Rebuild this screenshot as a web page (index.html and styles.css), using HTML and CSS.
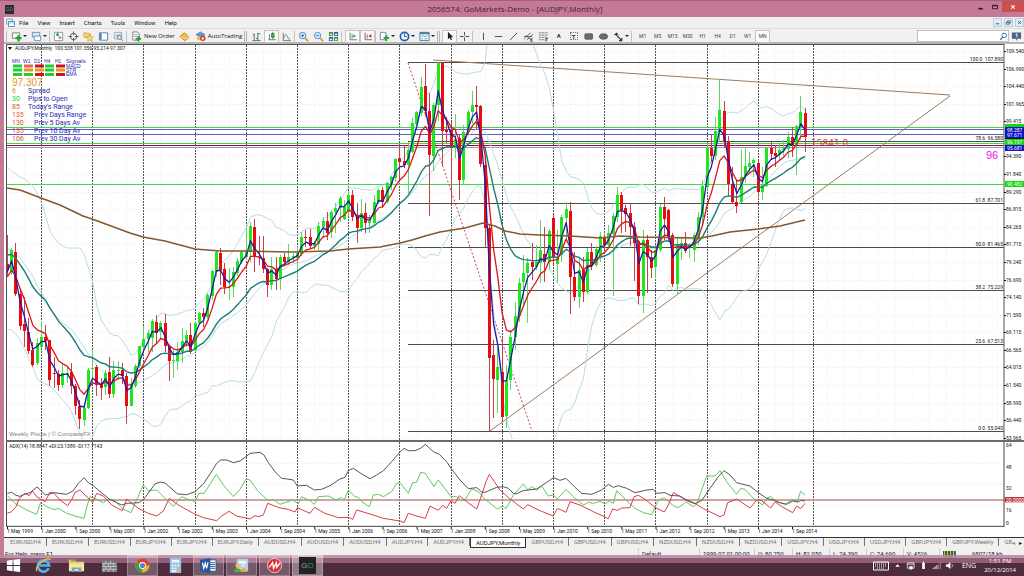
FILE: index.html
```html
<!DOCTYPE html>
<html lang="en">
<head>
<meta charset="utf-8">
<title>2056574: GoMarkets-Demo - [AUDJPY,Monthly]</title>
<link rel="stylesheet" href="styles.css">
</head>
<body>
<div class="window">
  <header class="titlebar">
    <span class="app-icon">GO</span>
    <h1 class="title">2056574: GoMarkets-Demo - [AUDJPY,Monthly]</h1>
    <div class="window-buttons">
      <button class="win-btn" aria-label="Minimize"><svg viewBox="0 0 12 12"><path d="M3 8h5" stroke="#2a1020" stroke-width="2"/></svg></button>
      <button class="win-btn" aria-label="Maximize"><svg viewBox="0 0 12 12"><path d="M3 4h6v4H3zM3 4.500h6" fill="none" stroke="#2a1020"/></svg></button>
      <button class="win-btn win-close" aria-label="Close"><svg viewBox="0 0 12 12"><path d="M4 4l4 4M8 4l-4 4" stroke="#fff" stroke-width="1.300"/></svg></button>
    </div>
  </header>

  <div class="client">
    <nav class="menubar">
      <svg class="menu-icon" viewBox="0 0 9 9"><path d="M.500 1h6v5h-6z" fill="#e8f2fb" stroke="#7aa7cc"/><path d="M2.500 3.500h6v5h-6z" fill="#fff" stroke="#5b93c0"/><path d="M3 5h5" stroke="#9cc4e4"/></svg>
      <button class="menu">File</button><button class="menu">View</button><button class="menu">Insert</button><button class="menu">Charts</button><button class="menu">Tools</button><button class="menu">Window</button><button class="menu">Help</button>
      <div class="mdi-buttons">
        <button class="mdi" aria-label="Minimize chart"><svg viewBox="0 0 8 8"><path d="M2 5.500h4" stroke="#345" /></svg></button>
        <button class="mdi" aria-label="Restore chart"><svg viewBox="0 0 8 8"><path d="M3 2h3.500v2.500H3zM1.500 3.500H5V6H1.500z" fill="#dce9f5" stroke="#456" stroke-width=".8"/></svg></button>
        <button class="mdi" aria-label="Close chart"><svg viewBox="0 0 8 8"><path d="M2.500 2.500l3 3M5.500 2.500l-3 3" stroke="#345"/></svg></button>
      </div>
    </nav>

    <div class="toolbar">
      <i class="grip"></i>
      <button class="tool wide" aria-label="New chart"><svg viewBox="0 0 12 12"><path d="M1.500 2h8v6h-8z" fill="#f4f8f4" stroke="#6a8a78"/><path d="M7 4.500h2.500v2h2V9h-2v2.500H7V9H5V6.500h2z" fill="#1fa52c"/></svg><b class="caret"></b></button>
      <button class="tool wide" aria-label="Profiles"><svg viewBox="0 0 12 12"><path d="M1.500 1.500h8v5h-8z" fill="#dcebf8" stroke="#5d8fb8"/><path d="M3.500 5.500h7v5h-7z" fill="#fff" stroke="#5d8fb8"/></svg><b class="caret"></b></button>
      <i class="sep"></i>
      <button class="tool" aria-label="Market watch"><svg viewBox="0 0 12 12"><path d="M1.500 1.500h9v9h-9z" fill="#fff" stroke="#6f9dc4"/><path d="M3 4l2-2 2 2-2 2z" fill="#27a336"/><path d="M5.500 7l2-1.500L9.500 7l-2 2z" fill="#e07b28"/></svg></button>
      <button class="tool" aria-label="Data window"><svg viewBox="0 0 12 12"><circle cx="6" cy="6" r="3.500" fill="none" stroke="#555"/><path d="M6 .500v4M6 7.500v4M.500 6h4M7.500 6h4" stroke="#555"/></svg></button>
      <button class="tool" aria-label="Navigator"><svg viewBox="0 0 12 12"><path d="M1 2h3l1 1h3v4H1z" fill="#f5d668" stroke="#c49a28" stroke-width=".7"/><path d="M7.500 4l1.200 2.300 2.600.4-1.900 1.800.5 2.600-2.400-1.200-2.400 1.200.5-2.600L3.700 6.700l2.600-.4z" fill="#ffe066" stroke="#c08a18" stroke-width=".6"/></svg></button>
      <button class="tool" aria-label="Terminal"><svg viewBox="0 0 12 12"><path d="M1.500 2h9v8h-9z" fill="#fff" stroke="#4a7fb4"/><path d="M2 2.500h2v7H2z" fill="#4a7fb4"/></svg></button>
      <button class="tool" aria-label="Strategy tester"><svg viewBox="0 0 12 12"><path d="M1.500 1.500h8v7h-8z" fill="#e9f1f7" stroke="#9ab"/><path d="M3 6l1.500-2L6 6l2-3" fill="none" stroke="#79a"/><circle cx="7" cy="7" r="2.200" fill="#dceaf6" stroke="#678"/><path d="M9 9l2 2" stroke="#678"/></svg></button>
      <i class="sep"></i>
      <button class="tool labelled"><svg viewBox="0 0 12 12"><path d="M2 1h5l2 2v7H2z" fill="#fff" stroke="#778"/><path d="M3.500 4h4M3.500 6h3" stroke="#99a"/><path d="M7 5.500h2v2h2v2H9v2H7v-2H5v-2h2z" fill="#1fa52c"/></svg>New Order</button>
      <button class="tool" aria-label="Metaeditor"><svg viewBox="0 0 12 12"><path d="M1 6l5-4 5 5-4.500 3.500z" fill="#f2be36" stroke="#b7801a"/><path d="M2 6.500l5 2 4-1.500" fill="none" stroke="#fff0b0" stroke-width=".8"/></svg></button>
      <button class="tool labelled"><svg viewBox="0 0 12 12"><path d="M1 4l5-3 5 3-5 2.500z" fill="#5a9ad2" stroke="#356c9e" stroke-width=".6"/><path d="M2 6h6v4H2z" fill="#f0c040"/><circle cx="8.500" cy="8" r="3" fill="#d83a20"/><path d="M7.200 7h2.500v2.200H7.200z" fill="#fff"/></svg>AutoTrading</button>
      <i class="sep group"></i>
      <button class="tool" aria-label="Bar chart"><svg viewBox="0 0 12 12"><path d="M1.500 10.500h9M3.500 10V3M7.500 10V2M7.500 3H10M5.500 8h2M2 4h1.500" stroke="#47705a" fill="none"/></svg></button>
      <button class="tool pressed" aria-label="Candlesticks"><svg viewBox="0 0 12 12"><path d="M1.500 10.500h9M3 10V4M7 1v9" stroke="#47705a"/><path d="M5.500 3h3v4.500h-3z" fill="#3bc04a" stroke="#267a34"/></svg></button>
      <button class="tool" aria-label="Line chart"><svg viewBox="0 0 12 12"><path d="M2.500 2v8.500H11M3 8c1-5 3-5 4-2s2 3 3 3" stroke="#6b7b70" fill="none"/></svg></button>
      <i class="sep"></i>
      <button class="tool" aria-label="Zoom in"><svg viewBox="0 0 12 12"><circle cx="5" cy="5" r="3.500" fill="#d9ecfb" stroke="#4a86bd"/><path d="M3.500 5h3M5 3.500v3" stroke="#2468a8"/><path d="M8 8l3 3" stroke="#d09a30" stroke-width="2"/></svg></button>
      <button class="tool" aria-label="Zoom out"><svg viewBox="0 0 12 12"><circle cx="5" cy="5" r="3.500" fill="#d9ecfb" stroke="#4a86bd"/><path d="M3.500 5h3" stroke="#2468a8"/><path d="M8 8l3 3" stroke="#d09a30" stroke-width="2"/></svg></button>
      <button class="tool" aria-label="Tile windows"><svg viewBox="0 0 12 12"><path d="M1 1h4.500v4.500H1zM6.500 6.500H11V11H6.500z" fill="#3f9a36"/><path d="M6.500 1H11v4.500H6.500zM1 6.500h4.500V11H1z" fill="#3567b0"/><path d="M2 3h2.500v1.500H2zM7.500 3H10v1.500H7.500zM2 8.500h2.500V10H2zM7.500 8.500H10V10H7.500z" fill="#e8f2e4"/></svg></button>
      <i class="sep gap"></i>
      <button class="tool pressed" aria-label="Auto scroll"><svg viewBox="0 0 12 12"><path d="M2.500 2v8.500H11M5 4v5" stroke="#47705a" fill="none"/><path d="M6.500 4l3 2-3 2z" fill="#2aa53a"/></svg></button>
      <button class="tool pressed" aria-label="Chart shift"><svg viewBox="0 0 12 12"><path d="M2.500 2v8.500H11M5 4v5" stroke="#6a5050" fill="none"/><path d="M10 3.500v5L6.500 6z" fill="#c03030"/></svg></button>
      <i class="sep"></i>
      <button class="tool wide" aria-label="Indicators"><svg viewBox="0 0 12 12"><path d="M1.500 1.500h6v8h-6z" fill="#fff" stroke="#789"/><path d="M7 4.500h2v2h2v2H9V11H7V8.500H5v-2h2z" fill="#1fa52c"/></svg><b class="caret"></b></button>
      <button class="tool wide" aria-label="Periods"><svg viewBox="0 0 12 12"><circle cx="6" cy="6" r="4.500" fill="#eef6fd" stroke="#1e5fae" stroke-width="1.800"/><path d="M6 3v3h2.500" fill="none" stroke="#444"/></svg><b class="caret"></b></button>
      <button class="tool wide" aria-label="Templates"><svg viewBox="0 0 12 12"><path d="M1 1.500h10v9H1z" fill="#fff" stroke="#447a9e"/><path d="M1 2.500h10" stroke="#447a9e" stroke-width="2"/><path d="M2.500 6l2-1 2 1 3-1M2.500 8.500h2M6 8.500h3" stroke="#5a9a80" fill="none"/></svg><b class="caret"></b></button>
      <i class="sep group"></i>
      <button class="tool pressed" aria-label="Cursor"><svg viewBox="0 0 12 12"><path d="M3.500 1v9l2-2 1.500 3 1.500-.7L7 7.500h3z" fill="#222"/></svg></button>
      <button class="tool" aria-label="Crosshair"><svg viewBox="0 0 12 12"><path d="M6 1v4M6 7v4M1 6h4M7 6h4" stroke="#444"/></svg></button>
      <i class="sep gap"></i>
      <button class="tool" aria-label="Vertical line"><svg viewBox="0 0 12 12"><path d="M6 2v8" stroke="#444"/></svg></button>
      <button class="tool" aria-label="Horizontal line"><svg viewBox="0 0 12 12"><path d="M2 6h8" stroke="#444"/></svg></button>
      <button class="tool" aria-label="Trendline"><svg viewBox="0 0 12 12"><path d="M2 10l8-8" stroke="#444"/></svg></button>
      <button class="tool" aria-label="Channel"><svg viewBox="0 0 12 12"><path d="M1 9l7-7M4 10l7-7M3 4.500l5 5M1 6h9" stroke="#444" stroke-width=".8"/><path d="M8.500 8v3.500M8.500 8.300h2M8.500 9.800h2M8.500 11.300h2" stroke="#222" stroke-width=".7"/></svg></button>
      <button class="tool" aria-label="Fibonacci"><svg viewBox="0 0 12 12"><path d="M1 2h10M1 4.500h10M1 7h10M1 9.500h6" stroke="#555" stroke-dasharray="1 .6"/><path d="M8.500 8v3.500M8.500 8.300h2.500M8.500 9.800h2" stroke="#222" stroke-width=".7"/></svg></button>
      <button class="tool glyph">A</button>
      <button class="tool glyph boxed"><span>T</span></button>
      <button class="tool" aria-label="Rectangle"><svg viewBox="0 0 12 12"><rect x="2" y="3" width="8.500" height="6" rx="1" fill="#6b6b6b" stroke="#333" stroke-width=".6"/></svg></button>
      <button class="tool" aria-label="Ellipse"><svg viewBox="0 0 12 12"><ellipse cx="6" cy="6" rx="4.500" ry="3" fill="#6b6b6b" stroke="#333" stroke-width=".6"/></svg></button>
      <button class="tool wide" aria-label="Arrows"><svg viewBox="0 0 12 12"><path d="M1 4l3-2.500L6 4H4.500l1 3L3 4.500z" fill="#333"/><path d="M5 5.500L9 10M9.500 7.500V10.500H6.500" stroke="#333" fill="none" stroke-width="1.300"/></svg><b class="caret"></b></button>
      <i class="sep gap"></i>
      <button class="tool period">M1</button><button class="tool period">M5</button><button class="tool period">M15</button><button class="tool period">M30</button><button class="tool period">H1</button><button class="tool period">H4</button><button class="tool period">D1</button><button class="tool period">W1</button><button class="tool period pressed">MN</button>
      <label class="search"><input type="search" aria-label="Search"><svg viewBox="0 0 12 12"><circle cx="7" cy="4.500" r="3" fill="#fff" stroke="#3f6fa8" stroke-width="1.300"/><path d="M5 7l-3.500 3.500" stroke="#3f6fa8" stroke-width="1.800"/></svg></label>
      <button class="tool" aria-label="Messages"><svg viewBox="0 0 12 12"><path d="M1 1.500h10v7H7l-1.500 2.500V8.500H1z" fill="#4a628c"/><path d="M5 4l1.500-1v4" stroke="#fff" fill="none"/></svg></button>
    </div>

    <main class="charts">
      <svg class="price-chart" id="price" viewBox="6 44 1018 396" role="img" aria-label="AUDJPY monthly price chart">
        <defs><clipPath id="plot"><path d="M7 44h997v395H7z"/></clipPath></defs>
        <g id="grid"></g>
        <g id="separators"></g>
        <g class="levels">
          <path class="green" d="M7 127.500h997M7 143.500h997M7 184.500h997"/>
          <path class="navy" d="M7 129.500h997M7 134.500h997"/>
          <path class="crimson" d="M7 145.500h997"/>
          <path class="lavender" d="M7 147.500h997"/>
          <path class="fib" d="M408 62.500h596M408 141.500h596M408 203.500h596M408 247.500h596M408 290.500h596M408 344.500h596M408 431.500h596"/>
        </g>
        <path class="trend" d="M433 60L950 95M490 431L950 96"/>
        <path class="fib-base" d="M408 63L532 431"/>
        <g id="bands" clip-path="url(#plot)"></g>
        <g id="candles"></g>
        <g id="averages"></g>
        <polyline class="ma slow" points="7,188 20,190 41,198 60,205 83,216 92,219 130,233 143,237 165,241 195,249 220,251 245,251 290,252 330,251 348,249 380,247 400,243 412,240 425,236 440,232 452,230 465,228 483,223 495,226 505,231 520,234 540,235 570,236 600,238 620,236 640,237 700,238 712,236 730,232 758,229 780,226 805,220"/>
        <path class="plot-edge" d="M6.500 44v396M6 44.500h998M1004 44v396"/>
        <g class="small">
          <path d="M8 47h4l-2 3z"/>
          <text x="15" y="50">AUDJPY,Monthly&#160; 100.538 101.356 95.214 97.307</text>
          <g class="fib-text">
            <text x="1003" y="61">100.0&#160; 107.890</text><text x="1003" y="140">78.6&#160; 96.580</text><text x="1003" y="202">61.8&#160; 87.701</text><text x="1003" y="246">50.0&#160; 81.465</text><text x="1003" y="289">38.2&#160; 75.229</text><text x="1003" y="343">23.6&#160; 67.513</text><text x="1003" y="430">0.0&#160; 55.040</text>
          </g>
        </g>
        <g class="signals">
          <text x="12" y="63">MN</text><text x="23" y="63">W1</text><text x="34" y="63">D1</text><text x="44" y="63">H4</text><text x="55" y="63">H1</text>
          <text class="wide-label" x="66" y="63">Signals</text>
          <text x="66" y="68">MACD</text><text x="66" y="72">STR</text><text x="66" y="76">EMA</text>
          <path stroke="#22cc33" d="M13 66h9M45 66h9M13 70h9M45 70h9M13 74.500h9M24 74.500h9M45 74.500h9"/>
          <path stroke="#e06a50" d="M24 66h9"/>
          <path stroke="#cc1420" d="M35 66h9M56 66h9M35 74.500h9M56 74.500h9"/>
          <path stroke="#e8961e" d="M24 70h9M35 70h9M56 70h9"/>
        </g>
        <text class="last-price" x="12" y="86">97.307</text>
        <g class="stats">
          <text class="amber" x="12" y="93">6</text><text x="28" y="93">Spread</text>
          <text class="lime" x="12" y="101">30</text><text x="28" y="101">Pips to Open</text>
          <text class="value" x="12" y="109">85</text><text x="28" y="109">Today's Range</text>
          <text class="value" x="12" y="117">135</text><text x="34" y="117">Prev Days Range</text>
          <text class="value" x="12" y="125">130</text><text x="34" y="125">Prev 5 Days Av</text>
          <text class="value" x="12" y="133">135</text><text x="34" y="133">Prev 10 Day Av</text>
          <text class="value" x="12" y="141">106</text><text x="34" y="141">Prev 30 Day Av</text>
        </g>
        <text class="countdown" x="811" y="146">15841.0</text>
        <text class="pivot-value" x="986" y="159">96</text>
        <text class="credit" x="9" y="436">Weekly Pivots | © CompassFX</text>
        <g class="small" id="scale"></g>
      </svg>
      <div class="splitter"></div>
      <svg class="adx-chart" id="adx" viewBox="18 36 3054 255" role="img" aria-label="ADX indicator">
        <g id="adx-grid"></g>
        <path class="adx-level" d="M21 210h2991"/>
        <polyline class="plus" points="22,197 45,220 80,240 110,253 122,218 140,230 162,239 175,235 200,250 225,258 252,265 262,225 270,200 290,208 310,218 325,207 345,212 365,235 393,248 405,220 430,165 445,182 470,180 500,210 520,229 545,200 565,208 585,215 597,190 612,190 635,155 649,133 670,165 700,200 720,178 738,147 750,150 775,185 805,212 818,208 840,223 878,210 895,222 905,200 930,212 943,223 955,200 985,198 1008,210 1025,202 1033,210 1045,180 1065,200 1075,202 1085,215 1108,230 1120,195 1135,193 1150,200 1175,185 1190,160 1200,158 1225,190 1238,158 1250,157 1262,127 1276,130 1302,170 1315,150 1353,200 1370,200 1385,212 1395,210 1415,177 1435,185 1455,208 1492,237 1508,228 1518,236 1540,195 1570,162 1583,180 1595,170 1610,180 1625,168 1645,198 1660,195 1672,207 1698,178 1720,200 1750,225 1765,217 1780,220 1800,214 1815,222 1828,213 1840,220 1850,182 1880,212 1905,235 1930,248 1955,254 1975,210 1993,203 2020,227 2035,233 2058,216 2080,230 2090,222 2105,180 2120,138 2145,138 2160,122 2180,155 2210,193 2222,175 2235,178 2260,205 2288,225 2300,205 2312,199 2330,215 2355,222 2378,210 2392,215 2402,184 2415,195"/>
        <polyline class="minus" points="22,250 35,245 48,230 58,205 75,190 88,197 97,183 110,200 135,215 150,187 162,190 180,210 203,227 215,210 225,187 240,180 255,195 278,217 290,190 310,198 335,225 367,242 380,207 395,220 415,235 445,250 470,258 490,243 508,205 535,225 580,250 610,263 650,272 665,258 687,244 710,258 750,267 765,257 775,260 790,255 803,220 840,234 865,238 885,246 892,233 930,250 943,232 975,250 1015,263 1045,262 1058,268 1070,240 1110,252 1150,265 1200,273 1212,278 1225,250 1250,258 1276,265 1290,228 1315,241 1328,226 1340,235 1353,212 1365,220 1378,197 1400,215 1430,237 1445,195 1458,155 1468,133 1500,180 1530,207 1570,237 1583,224 1620,242 1660,258 1672,235 1698,247 1710,215 1740,225 1780,245 1825,266 1838,237 1852,241 1865,234 1890,233 1902,200 1915,196 1935,208 1965,232 1993,246 2005,225 2020,188 2050,205 2085,220 2110,236 2160,260 2172,255 2183,218 2210,207 2250,234 2272,208 2285,212 2312,234 2325,215 2345,230 2378,248 2390,228 2402,236 2415,220"/>
        <polyline class="main" points="22,190 35,187 47,196 60,199 75,192 90,188 111,171 137,195 162,188 200,193 220,182 235,160 252,143 265,158 277,165 303,187 328,207 365,225 380,220 418,218 431,208 450,182 465,162 480,156 495,159 510,172 533,192 560,194 585,185 610,162 630,132 650,100 662,90 680,90 700,98 720,93 738,80 750,70 780,67 792,75 805,98 825,125 845,145 862,147 880,150 892,168 920,166 943,180 965,178 990,167 1020,147 1035,142 1045,122 1060,115 1090,135 1110,146 1130,135 1150,122 1175,95 1200,66 1212,55 1225,62 1245,62 1262,55 1276,43 1300,65 1318,73 1340,95 1353,115 1380,150 1405,176 1430,173 1445,186 1455,187 1490,172 1510,170 1525,175 1540,190 1548,192 1570,182 1610,177 1640,157 1661,143 1680,151 1698,145 1725,172 1745,190 1775,193 1805,180 1825,163 1840,172 1855,167 1880,175 1905,188 1940,180 1960,178 1970,190 1995,188 2010,196 2040,198 2060,212 2085,221 2105,212 2130,175 2155,140 2172,122 2190,135 2210,158 2225,162 2250,168 2275,188 2300,205 2320,210 2345,220 2360,223 2378,213 2395,216 2402,211 2415,213"/>
        <path class="adx-edge" d="M19.500 36v255M3012 36v255M18 289h2994"/>
        <path class="tag-red" d="M3014 201h60v16h-60z"/>
        <g class="adx-text">
          <text x="28" y="53">ADX(14) 18.8847 +DI:23.1389 -DI:17.7143</text>
          <text x="3018" y="50">64</text><text x="3018" y="118">48</text><text x="3018" y="179">32</text><text x="3018" y="245">16</text><text x="3018" y="284">0</text>
          <text class="tag-text" x="3018" y="215">20.0000</text>
        </g>
      </svg>
      <svg class="dates small" id="dates" viewBox="6 527 1018 10" role="img" aria-label="Time scale"></svg>
    </main>

    <nav class="tabs">
      <button class="tab">EURUSD,H4</button><button class="tab">EURUSD,H4</button><button class="tab">EURUSD,H4</button><button class="tab">EURJPY,H4</button><button class="tab">EURJPY,H4</button><button class="tab">EURJPY,Daily</button><button class="tab">AUDUSD,H4</button><button class="tab">AUDUSD,H4</button><button class="tab">AUDUSD,H4</button><button class="tab">AUDJPY,H4</button><button class="tab">AUDJPY,H4</button><button class="tab active">AUDJPY,Monthly</button><button class="tab">GBPUSD,H4</button><button class="tab">GBPUSD,H4</button><button class="tab">GBPUSD,H4</button><button class="tab">NZDUSD,H4</button><button class="tab">NZDUSD,H4</button><button class="tab">NZDUSD,H4</button><button class="tab">USDJPY,H4</button><button class="tab">USDJPY,H4</button><button class="tab">USDJPY,H4</button><button class="tab">GBPJPY,H4</button><button class="tab">GBPJPY,Weekly</button><button class="tab last">GB</button>
      <div class="tab-scroll"><button class="scroll-btn" aria-label="Scroll left">◂</button><button class="scroll-btn dark" aria-label="Scroll right">▸</button></div>
    </nav>

    <footer class="status">
      <span>For Help, press F1</span><span>Default</span><span>1999.07.01 00:00</span><span>O: 80.750</span><span>H: 82.050</span><span>L: 74.390</span><span>C: 74.690</span><span>V: 4526</span>
      <span class="traffic"><svg viewBox="0 0 13 7"><path d="M0 0h13v7H0z" fill="#3d5f36"/><path d="M1.500 0v7M4.500 0v7M7.500 0v4M10.500 0v7" stroke="#c8c832"/><path d="M9 2v5M12 0v4" stroke="#3a6ab0"/></svg>6807/18 kb</span>
    </footer>
  </div>
</div>

<div class="taskbar">
  <button class="task" aria-label="Start"><svg viewBox="0 0 18 18"><path d="M2 4l6-1v5.500H2zM9 2.800L16 2v6.500H9zM2 9.500h6V15l-6-1zM9 9.500h7V16l-7-1z" fill="#fff"/></svg></button>
  <button class="task" aria-label="Internet Explorer"><svg viewBox="0 0 18 18"><path d="M14.500 12a6 6 0 1 1 .5-3H5" fill="none" stroke="#4fb4f0" stroke-width="2.800"/><path d="M2 15C-1 10 13-1 16.500 3" fill="none" stroke="#f4c430" stroke-width="1.300"/></svg></button>
  <button class="task" aria-label="File Explorer"><svg viewBox="0 0 18 18"><path d="M1 3h6l1 2h9v10H1z" fill="#f0cf72"/><path d="M3 3h4v2H3z" fill="#78b84c"/><path d="M1 7h16v8H1z" fill="#f9e29b"/><path d="M4 16v-5h10v5h-3v-3H7v3z" fill="#67aee0"/></svg></button>
  <button class="task" aria-label="Firewall"><svg viewBox="0 0 18 18"><path d="M1 4h12l4 3v9H1z" fill="#777c80"/><path d="M1 7h15M1 10h16M1 13h16M5 4v3M10 4v3M3 7v3M8 7v3M13 7v3M5 10v3M10 10v3M3 13v3M8 13v3M13 13v3" stroke="#c3c7ca"/></svg></button>
  <button class="task open" aria-label="Chrome"><svg viewBox="0 0 18 18"><circle cx="9" cy="9" r="7.500" fill="#e2b52c"/><path d="M9 9L2.500 5.300A7.500 7.500 0 0 1 15.700 5.500z" fill="#d9402f"/><path d="M9 9L2.500 5.300A7.500 7.500 0 0 0 8.500 16.500z" fill="#3f9c49"/><path d="M9 9h7.400a7.500 7.500 0 0 0-.7-3.500H9z" fill="#d9402f"/><circle cx="9" cy="9" r="3.600" fill="#fff"/><circle cx="9" cy="9" r="2.700" fill="#4a86d8"/></svg></button>
  <button class="task" aria-label="Calculator"><svg viewBox="0 0 18 18"><path d="M3 1h12v16H3z" fill="#8ec3e6"/><path d="M5 3h8v3H5z" fill="#e8f6ff"/><path d="M5 8h2v2H5zM8 8h2v2H8zM11 8h2v2h-2zM5 11h2v2H5zM8 11h2v2H8zM5 14h5v2H5z" fill="#eef7fd"/><path d="M11 11h2v5h-2z" fill="#e8b860"/></svg></button>
  <button class="task open" aria-label="Word"><svg viewBox="0 0 18 18"><path d="M9 3h8v12H9z" fill="#fff" stroke="#2b579a"/><path d="M11 6h5M11 8h5M11 10h5M11 12h5" stroke="#2b579a"/><path d="M0 3l11-2v16L0 15z" fill="#2b579a"/><path d="M2.500 6l1.500 6 1.500-5.500L7 12l1.500-6.500" fill="none" stroke="#fff" stroke-width="1.300"/></svg></button>
  <button class="task open" aria-label="Contacts"><svg viewBox="0 0 18 18"><path d="M4 2h12v13H4z" fill="#a8d4ec"/><path d="M6 4h8v3H6z" fill="#eef8fd"/><circle cx="5" cy="9" r="2.500" fill="#e8c05a"/><path d="M1 16c0-5 8-5 8 0z" fill="#5ba840"/><circle cx="11" cy="9" r="2" fill="#f0d8b0"/><path d="M8 16c0-5 7-5 7 0z" fill="#e8a838"/></svg></button>
  <button class="task open" aria-label="Trading platform"><svg viewBox="0 0 18 18"><circle cx="9" cy="9" r="7.500" fill="#d62f38" stroke="#f2c9cc"/><path d="M3.500 11L7 6l1 6 3-6 .5 5L15 6" fill="none" stroke="#fff" stroke-width="1.500"/></svg></button>
  <button class="task open current" aria-label="GoMarkets"><span class="go">G<em>O</em></span></button>
  <div class="tray">
    <svg class="keyboard" viewBox="0 0 16 10"><path d="M.500 1h15v8H.500z" fill="none" stroke="#fff"/><path d="M2 3h12M2 5h12M4 7h8" stroke="#fff" stroke-dasharray="1 1"/></svg>
    <svg viewBox="0 0 10 10"><path d="M5 3.500L7.500 6.500h-5z" fill="#fff"/></svg>
    <svg viewBox="0 0 10 10"><path d="M1.500 2h7.500v6H1.500z" fill="none" stroke="#ddd"/><path d="M1 3.500h8M4 6h3v3H4z" stroke="#ddd" fill="#fff"/></svg>
    <svg viewBox="0 0 10 10"><path d="M3.500 2h3v7h-3zM4.500.500h1V2h-1z" fill="#fff"/></svg>
    <svg viewBox="0 0 10 10"><path d="M1.500 9V7.500M3.500 9V6M5.500 9V4.500" stroke="#fff"/><path d="M7.500 9V3M9.500 9V1" stroke="#a08a98"/></svg>
    <svg viewBox="0 0 10 10"><path d="M1 4h2l3-3v8L3 6.500H1z" fill="#fff"/><path d="M7.500 3.500c1 1 1 2.500 0 3.500" stroke="#ccc" fill="none"/></svg>
    <span class="lang">ENG</span>
    <time class="clock">1:51 PM<br>20/12/2014</time>
  </div>
</div>
<script src="chart.js"></script>
</body>
</html>
```

FILE: styles.css
```css
* { box-sizing: border-box; }

body {
  margin: 0;
  min-height: 100vh;
  background: #4e2c3e;
  color: #222;
  font: 6px/8px Roboto, "Noto Sans", sans-serif;
  overflow: hidden;
}

button {
  margin: 0;
  padding: 0;
  border: 0;
  background: none;
  color: inherit;
  font: inherit;
}

.window { background: #c47a97; }

.titlebar {
  display: flex;
  align-items: stretch;
  height: 17px;
  padding-left: 5px;
  border-top: 1px solid #a55f7a;
}

.app-icon {
  align-self: center;
  width: 9px;
  height: 9px;
  background: #2b2b2b;
  color: #6a8a7a;
  font-size: 5px;
  line-height: 9px;
  text-align: center;
}

.title {
  flex: 1;
  margin: 0;
  padding-left: 42px;
  color: #43222f;
  font: 8px/15px "Open Sans", sans-serif;
  text-align: center;
}

.window-buttons { display: flex; align-items: flex-start; }
.win-btn { width: 14px; height: 11px; }
.win-btn svg { display: block; width: 12px; height: 10px; margin: 0 auto; }
.win-close { width: 22px; background: #c9504e; }

.client {
  margin-left: 4px;
  background: #f0f0f0;
}

.menubar {
  display: flex;
  align-items: center;
  height: 11px;
  padding-left: 2px;
}

.menu-icon { width: 9px; height: 9px; }
.menu { padding: 0 4px; margin-right: 1px; color: #111; line-height: 10px; }
.mdi-buttons { display: flex; gap: 2px; margin-left: auto; }
.mdi { width: 9px; height: 9px; border: 1px solid #b9cbe0; background: #e2ecf6; }
.mdi svg { display: block; width: 7px; height: 7px; }

.toolbar {
  display: flex;
  align-items: center;
  height: 15px;
  padding-left: 2px;
  border-top: 1px solid #dcdcdc;
  background: #f1f1f1;
}

.grip { width: 3px; height: 11px; border-left: 1px solid #bbb; }
.tool {
  display: flex;
  flex: none;
  align-items: center;
  justify-content: center;
  width: 15px;
  height: 13px;
}
.tool svg { width: 11px; height: 11px; flex: none; }
.wide { width: 20px; gap: 1px; }
.caret { border: 2px solid transparent; border-top-color: #222; border-bottom: 0; }
.labelled { width: auto; gap: 2px; padding: 0 2px 0 3px; color: #111; font: 6px/10px "Open Sans", sans-serif; }
.pressed { border: 1px solid #c4c4c4; background: #fafafa; }
.pressed svg { width: 10px; height: 10px; }
.glyph { color: #333; font-weight: 700; }
.boxed span { width: 8px; height: 8px; border: 1px dotted #777; font-size: 6px; line-height: 7px; }
.period { color: #444; font-size: 5px; }
.sep { flex: none; width: 2px; height: 11px; border-left: 1px solid #c2c2c2; }
.gap { width: 4px; }
.group { width: 5px; border-left: 3px double #b4b4b4; }

.search {
  display: flex;
  align-items: center;
  width: 92px;
  height: 12px;
  margin-left: auto;
  border: 1px solid #c0c0c0;
  background: #fff;
}
.search input { flex: 1; min-width: 0; height: 8px; padding: 0; border: 0; outline: 0; background: none; font-size: 6px; }
.search svg { width: 9px; height: 9px; }

.charts {
  padding-left: 2px;
  border-top: 2px solid #b4b4b4;
  background: #fff;
  margin-top: -1px;
}
.charts svg { display: block; width: 100%; height: auto; }
.splitter { height: 2px; background: #6a6a6a; }

.small, .small text { font: 5px Roboto, sans-serif; fill: #111; }
.grid-line { fill: none; stroke: #f5f5f5; stroke-dasharray: 2 1; }
.year-line { fill: none; stroke: #555; stroke-dasharray: 2 1; }
.levels path { fill: none; }
.levels .green { stroke: #44d644; }
.levels .navy { stroke: #5c5cc4; }
.levels .crimson { stroke: #8c1028; }
.levels .lavender { stroke: #9494d0; }
.levels .fib { stroke: #4c4c4c; }
.trend { fill: none; stroke: #9c7c60; }
.fib-base { fill: none; stroke: #d04050; stroke-dasharray: 2 2; }
.up { fill: #1fe61f; stroke: none; }
.down { fill: #e80b14; stroke: none; }
.wick-up { stroke: #5fd65f; }
.wick-down { stroke: #c8404c; }
.band { fill: none; stroke: #b9dbe8; }
.ma { fill: none; stroke-linejoin: round; }
.fast { stroke: #1c1ca8; stroke-width: 1.300; }
.medium { stroke: #d8141c; stroke-width: 1.300; }
.base { stroke: #1c7c78; stroke-width: 1.400; }
.slow { stroke: #85572f; stroke-width: 1.500; }
.plot-edge { fill: none; stroke: #555; }
.fib-text { text-anchor: end; }

.signals text { fill: #2a2ab4; font: 5px "Liberation Sans", sans-serif; }
.signals .wide-label { font-size: 6px; }
.signals path { stroke-width: 3; }
.last-price { fill: #e8961e; font: 10px "Liberation Sans", sans-serif; }
.stats text { fill: #2a2ab4; font: 7px Roboto, sans-serif; }
.stats .value { fill: #dc5428; }
.stats .amber { fill: #e8961e; }
.stats .lime { fill: #22cc33; }
.countdown { fill: #e03838; font: 9px "DejaVu Sans", sans-serif; }
.pivot-value { fill: #e815e0; font: 11px "Liberation Sans", sans-serif; }
.credit { fill: #808080; font: 6px "Liberation Sans", sans-serif; }
.tag-green { fill: #12d812; }
.tag-blue { fill: #1010c8; }
.tag-black { fill: #111; }
.small .tag-text { fill: #fff; }

.adx-chart polyline { fill: none; stroke-width: 3; }
.plus { stroke: #5fc85f; }
.minus { stroke: #d84048; }
.main { stroke: #555; }
.adx-level { stroke: #c48484; stroke-width: 4; }
.adx-edge { fill: none; stroke: #444; stroke-width: 3; }
.adx-lines { stroke: #555; stroke-width: 3; stroke-dasharray: 6 3; }
.adx-grid-lines { fill: none; stroke: #f5f5f5; stroke-width: 3; stroke-dasharray: 6 3; }
.adx-text text { font: 15px Roboto, sans-serif; fill: #111; }
.adx-text .tag-text { fill: #fff; }
.tag-red { fill: #c03434; }

.tabs {
  display: flex;
  position: relative;
  height: 11px;
  padding-left: 1px;
  border-top: 1px solid #333;
  overflow: hidden;
}
.tab {
  flex: none;
  height: 8px;
  padding: 0 5px;
  border-right: 1px solid #777;
  color: #777;
  line-height: 8px;
}
.active {
  height: 10px;
  border: 1px solid #333;
  border-top: 0;
  background: #fff;
  color: #111;
}
.last { padding-right: 0; border: 0; }
.tab-scroll { position: absolute; right: 0; top: 0; display: flex; gap: 4px; padding: 0 2px; }
.scroll-btn { color: #888; line-height: 9px; }
.dark { color: #111; }

.status {
  display: grid;
  grid-template-columns: 1fr 61px 55px 38px 37px 37px 37px 36px 85px;
  height: 10px;
  padding-left: 1px;
  overflow: hidden;
  line-height: 12px;
}
.status span { padding-left: 3px; border-left: 1px solid #d0d0d0; white-space: nowrap; }
.status span:first-child { padding-left: 0; border: 0; }
.traffic { display: flex; align-items: center; gap: 16px; }
.traffic svg { width: 13px; height: 7px; }

.taskbar {
  display: flex;
  align-items: center;
  position: relative;
  height: 21px;
  margin-top: -3px;
  background: linear-gradient(#b98aa0e0 0 3px, #935c76 3px 8px, #4e2c3e 8px);
}
.task {
  display: grid;
  place-items: center;
  width: 31px;
  height: 21px;
  margin-right: 2px;
}
.task:first-child { width: 26px; }
.task svg { width: 17px; height: 17px; }
.open { background: #ffffff38; border: 1px solid #ffffff40; }
.current { background: #ffffff60; }
.go { width: 17px; height: 17px; background: #222; color: #999; font: 8px/17px "Liberation Sans", sans-serif; text-align: center; }
.go em { color: #1c9c5c; font-style: normal; }

.tray { display: flex; align-items: center; gap: 4px; margin-left: auto; padding-right: 8px; color: #fff; }
.tray svg { width: 9px; height: 9px; }
.tray .keyboard { width: 16px; height: 10px; }
.lang { padding: 0 4px; font: 7px/9px "Open Sans", sans-serif; }
.clock { font: 6px/9px "Open Sans", sans-serif; text-align: center; }
```

FILE: chart.js
```javascript
// One candle per month: high, body top, body bottom, low (chart units), colour.
const CANDLES = `235 264 270 277 r|248 250 272 275 g|243 252 294 296 r|290 294 326 330 r|297 324 331 347 r|318 332 351 354 r|342 350 365 367 r|338 343 363 365 g|321 337 347 348 g|325 337 341 350 r|340 340 380 386 r|357 373 374 388 r|370 374 385 391 r|363 373 385 388 g|367 373 375 383 g|363 372 386 394 r|384 386 406 415 r|400 406 419 429 r|405 408 420 426 g|368 370 408 409 g|350 368 369 380 g|365 367 385 396 r|378 384 388 400 r|370 373 387 395 g|357 372 394 398 r|361 370 394 398 g|361 370 371 380 g|363 370 376 384 r|373 376 406 424 r|378 385 406 406 g|364 366 386 388 g|346 346 366 368 g|326 339 347 350 g|330 333 339 352 g|319 321 338 352 g|315 322 333 343 r|321 323 332 340 g|314 323 346 352 r|346 347 361 381 r|350 360 361 378 g|342 352 361 370 g|328 341 352 363 g|330 335 342 347 g|323 335 352 354 r|321 323 350 352 g|312 313 323 325 g|308 313 317 327 r|293 295 317 319 g|270 271 296 300 g|250 252 272 277 g|248 253 270 285 r|263 269 287 294 r|268 286 287 300 g|267 272 287 297 g|258 261 273 276 g|250 252 262 264 g|228 251 257 260 g|222 226 252 262 g|219 227 257 272 r|236 257 258 265 r|236 258 269 273 r|268 269 285 297 r|257 269 285 290 g|257 269 279 290 r|255 257 279 290 g|253 257 262 265 r|244 257 262 265 g|253 256 258 263 g|247 253 258 278 g|232 237 254 256 g|230 237 238 247 r|229 237 246 248 r|241 243 246 250 g|222 226 244 250 g|217 221 227 238 g|212 221 233 240 r|210 212 232 238 g|203 208 212 233 g|196 198 208 222 g|200 207 219 220 g|191 195 212 216 g|190 195 217 221 r|203 215 228 243 r|199 213 228 232 g|203 213 223 233 r|215 221 223 233 g|195 202 223 226 g|188 190 202 204 g|187 190 202 208 r|182 183 202 204 g|176 177 184 190 g|158 159 178 182 g|145 158 162 180 r|145 161 165 168 r|142 150 165 193 g|118 123 152 153 g|111 112 124 126 g|77 87 113 116 g|64 86 111 116 r|93 111 155 216 r|103 105 156 171 g|62 63 105 121 g|62 63 131 166 r|117 130 132 143 r|122 130 148 202 r|114 139 148 158 g|135 138 180 200 r|125 132 180 184 g|110 112 132 134 g|91 105 112 124 g|86 105 107 130 r|105 106 164 167 r|163 165 228 247 r|225 228 358 431 r|340 355 379 418 r|347 367 380 413 g|337 372 417 420 r|365 380 416 428 g|330 337 380 390 g|302 316 337 350 g|278 283 316 322 g|255 273 282 305 g|258 263 273 323 g|243 262 267 280 r|245 262 267 270 g|220 250 263 283 g|227 254 262 282 r|229 231 262 270 g|215 218 258 265 r|230 258 264 283 g|215 217 255 262 g|202 209 218 240 g|202 211 277 314 r|252 277 297 301 r|258 270 297 308 g|257 270 292 302 r|248 252 292 294 g|243 252 265 270 r|246 249 265 267 g|232 236 257 262 g|234 237 245 249 r|225 233 245 248 g|213 216 234 296 g|187 195 217 222 g|192 195 210 233 r|205 208 214 232 r|203 213 227 246 r|222 227 243 281 r|240 241 296 304 r|230 240 296 313 g|235 240 257 293 r|250 257 268 278 r|245 250 267 278 g|204 207 250 252 g|197 207 219 240 r|209 210 237 240 r|233 235 284 287 r|238 245 284 295 g|238 243 246 260 g|232 243 251 253 r|243 245 248 258 g|233 235 250 262 g|212 217 237 245 g|180 186 217 225 g|143 148 187 190 g|135 148 156 162 r|117 131 156 160 g|79 110 132 142 g|101 111 142 148 r|136 142 184 196 r|167 184 202 204 r|180 202 206 213 r|150 177 202 203 g|148 166 176 183 g|152 163 167 173 g|158 160 163 177 g|160 163 192 197 r|167 185 192 200 g|147 148 186 187 g|142 148 154 160 r|145 153 156 167 r|143 150 155 160 g|140 148 150 156 g|132 137 149 158 g|127 137 145 157 r|125 126 145 175 g|96 112 127 140 g|108 113 137 152 r`
  .split("|").map(row => {
    const [high, top, bottom, low, colour] = row.split(" ");
    return { high: +high, top: +top, bottom: +bottom, low: +low, up: colour === "g" };
  });

const STEP = 4.2667;
const xAt = i => 7.3 + i * STEP;
const closes = CANDLES.map(c => (c.up ? c.top : c.bottom));
const byId = id => document.getElementById(id);
const line = (cls, ys) =>
  `<polyline class="${cls}" points="${ys.map((y, i) => `${xAt(i).toFixed(1)},${y.toFixed(1)}`).join(" ")}"/>`;

byId("candles").innerHTML = CANDLES.map((c, i) => {
  const x = Math.floor(xAt(i)) + 0.5;
  const kind = c.up ? "up" : "down";
  return `<path class="wick-${kind}" d="M${x} ${c.high}V${c.low}"/>` +
    `<rect class="${kind}" x="${x - 1.5}" y="${c.top}" width="3" height="${Math.max(1, c.bottom - c.top)}"/>`;
}).join("");

function ema(start, alpha) {
  let value = start;
  return closes.map((close, i) => (i ? (value += alpha * (close - value)) : value));
}
byId("averages").innerHTML =
  line("ma base", ema(255, 0.095)) + line("ma medium", ema(277, 0.25)) + line("ma fast", ema(272, 0.5));

const LEAD_UPPER = [167, 171, 174, 177, 179, 182, 186, 193, 203, 216, 231, 238, 243, 246, 248, 248, 248, 248, 254];
const LEAD_LOWER = [329, 330, 334, 340, 349, 358, 367, 379, 382, 384, 386, 390, 395, 400, 405, 411, 422, 434, 440];
const upper = [], middle = [], lower = [];
closes.forEach((_, i) => {
  if (i < 19) {
    upper.push(LEAD_UPPER[i]);
    lower.push(LEAD_LOWER[i]);
    middle.push((LEAD_UPPER[i] + LEAD_LOWER[i]) / 2);
    return;
  }
  const span = closes.slice(i - 19, i + 1);
  const mean = span.reduce((a, b) => a + b) / 20;
  const dev = Math.sqrt(span.reduce((a, b) => a + (b - mean) ** 2, 0) / 20);
  upper.push(mean - 2 * dev);
  middle.push(mean);
  lower.push(mean + 2 * dev);
});
byId("bands").innerHTML = line("band", upper) + line("band", middle) + line("band", lower);

// Price scale and grid
const PRICES = ["109.540", "106.990", "104.440", "101.965", "99.415", "", "94.390", "91.840", "89.290", "86.815", "84.265", "81.715", "79.240", "76.690", "74.140", "71.590", "69.115", "66.565", "64.015", "61.540", "58.990", "56.440", "53.965"];
const priceY = i => 51 + i * 17.58;
let scale = "";
let grid = "";
PRICES.forEach((price, i) => {
  const y = priceY(i);
  grid += `M7 ${Math.round(y) + 0.5}H1004`;
  if (price) scale += `<path d="M1004 ${Math.round(y)}h2v1h-2z"/><text x="1006" y="${y + 2}">${price}</text>`;
});
const TAGS = [["green", 127, ""], ["black", 138, ""], ["blue", 130, "98.287"], ["blue", 135, "97.671"], ["green", 142, "96.197"], ["blue", 148, "95.681"], ["green", 184, "90.482"]];
TAGS.forEach(([colour, y, text]) => {
  scale += `<rect class="tag-${colour}" x="1005" y="${y - 3}" width="19" height="6"/>`;
  if (text) scale += `<text class="tag-text" x="1007" y="${y + 2}">${text}</text>`;
});
byId("scale").innerHTML = scale;

for (let x = 24.5; x < 1004; x += 17.07) grid += `M${x.toFixed(1)} 44V440`;
byId("grid").innerHTML = `<path class="grid-line" d="${grid}"/>`;

const years = Array.from({ length: 15 }, (_, i) => Math.floor(41.5 + i * 51.2) + 0.5).concat(813.5);
byId("separators").innerHTML = `<path class="year-line" d="${years.map(x => `M${x} 45V440`).join("")}"/>`;
byId("adx-grid").innerHTML =
  `<path class="adx-grid-lines" d="M21 100H3012M21 162H3012M21 226H3012"/>` +
  `<path class="adx-lines" d="${years.map(x => `M${x * 3} 36V289`).join("")}"/>`;

// Time scale: one label every eight months
let dates = "";
for (let i = 0; i < 24; i++) {
  const month = 4 + i * 8;
  const name = ["Jan", "", "", "", "May", "", "", "", "Sep"][month % 12];
  const x = 7 + i * 34.13;
  dates += `<path d="M${x.toFixed(1)} 527h1v2h-1z"/><text x="${x.toFixed(1)}" y="533">1 ${name} ${1999 + Math.floor(month / 12)}</text>`;
}
byId("dates").innerHTML = dates;
```
